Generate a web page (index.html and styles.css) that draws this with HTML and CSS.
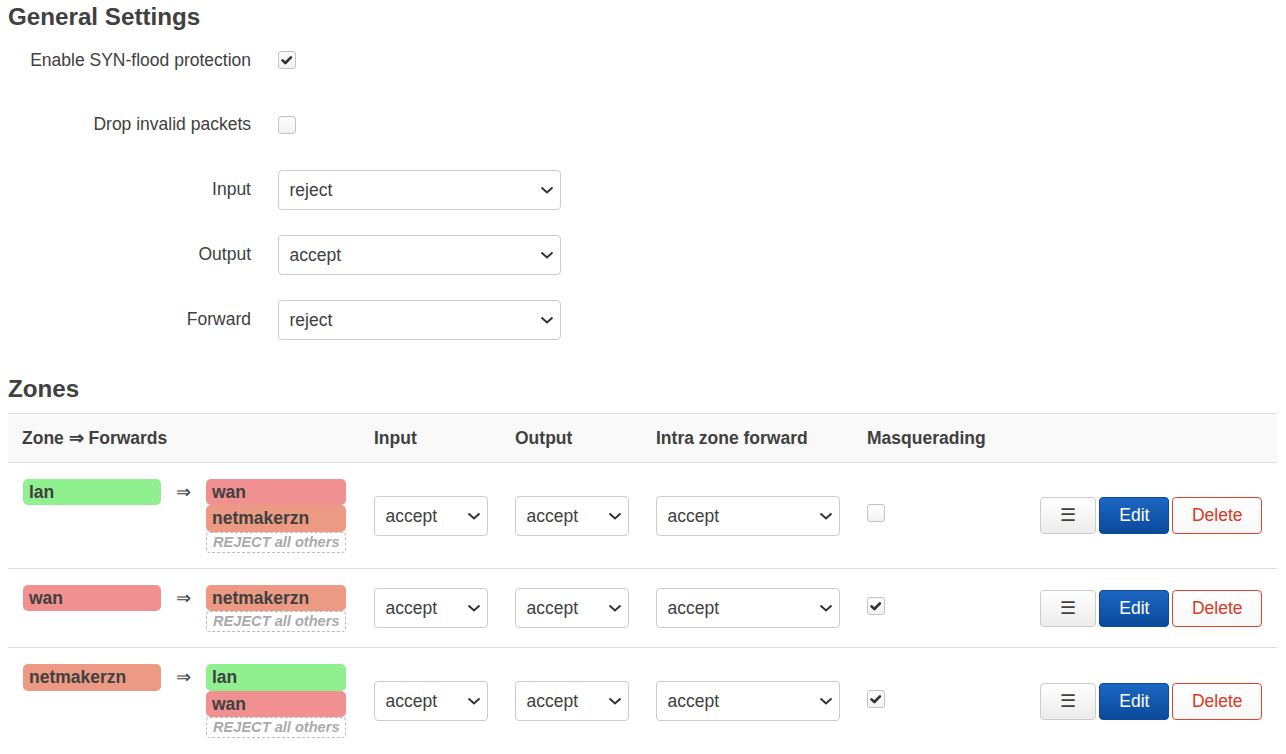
FILE: index.html
```html
<!DOCTYPE html>
<html lang="en">
<head>
    <meta charset="UTF-8">
    <meta name="viewport" content="width=device-width, initial-scale=1.0">
    <title>Firewall - Zone Settings</title>
    <link rel="stylesheet" href="styles.css">
</head>
<body>
    <h2 class="section-title">General Settings</h2>

    <div class="settings">
        <div class="field">
            <label class="field-label" for="synflood">Enable SYN-flood protection</label>
            <input type="checkbox" class="check" id="synflood" checked>
        </div>
        <div class="field">
            <label class="field-label" for="drop_invalid">Drop invalid packets</label>
            <input type="checkbox" class="check" id="drop_invalid">
        </div>
        <div class="field">
            <label class="field-label" for="input">Input</label>
            <select id="input" class="select wide">
                <option>reject</option>
                <option>accept</option>
                <option>drop</option>
            </select>
        </div>
        <div class="field">
            <label class="field-label" for="output">Output</label>
            <select id="output" class="select wide">
                <option>accept</option>
                <option>reject</option>
                <option>drop</option>
            </select>
        </div>
        <div class="field">
            <label class="field-label" for="forward">Forward</label>
            <select id="forward" class="select wide">
                <option>reject</option>
                <option>accept</option>
                <option>drop</option>
            </select>
        </div>
    </div>

    <h2 class="section-title zones-title">Zones</h2>

    <table class="zones">
        <colgroup>
            <col class="col-zone">
            <col class="col-policy">
            <col class="col-policy">
            <col class="col-intra">
            <col class="col-masq">
            <col>
        </colgroup>
        <thead>
            <tr>
                <th>Zone &rArr; Forwards</th>
                <th>Input</th>
                <th>Output</th>
                <th>Intra zone forward</th>
                <th>Masquerading</th>
                <th></th>
            </tr>
        </thead>
        <tbody>
            <tr>
                <td>
                    <div class="zone-forwards">
                        <span class="badge lan">lan</span>
                        <span class="arrow">&rArr;</span>
                        <div class="dests">
                            <span class="badge wan">wan</span>
                            <span class="badge netmaker">netmakerzn</span>
                            <span class="others">REJECT all others</span>
                        </div>
                    </div>
                </td>
                <td><select class="select small"><option>accept</option><option>reject</option><option>drop</option></select></td>
                <td><select class="select small"><option>accept</option><option>reject</option><option>drop</option></select></td>
                <td><select class="select medium"><option>accept</option><option>reject</option><option>drop</option></select></td>
                <td><input type="checkbox" class="check"></td>
                <td class="actions">
                    <button class="btn">&#9776;</button><button class="btn edit">Edit</button><button class="btn delete">Delete</button>
                </td>
            </tr>
            <tr>
                <td>
                    <div class="zone-forwards">
                        <span class="badge wan">wan</span>
                        <span class="arrow">&rArr;</span>
                        <div class="dests">
                            <span class="badge netmaker">netmakerzn</span>
                            <span class="others">REJECT all others</span>
                        </div>
                    </div>
                </td>
                <td><select class="select small"><option>accept</option><option>reject</option><option>drop</option></select></td>
                <td><select class="select small"><option>accept</option><option>reject</option><option>drop</option></select></td>
                <td><select class="select medium"><option>accept</option><option>reject</option><option>drop</option></select></td>
                <td><input type="checkbox" class="check" checked></td>
                <td class="actions">
                    <button class="btn">&#9776;</button><button class="btn edit">Edit</button><button class="btn delete">Delete</button>
                </td>
            </tr>
            <tr>
                <td>
                    <div class="zone-forwards">
                        <span class="badge netmaker">netmakerzn</span>
                        <span class="arrow">&rArr;</span>
                        <div class="dests">
                            <span class="badge lan">lan</span>
                            <span class="badge wan">wan</span>
                            <span class="others">REJECT all others</span>
                        </div>
                    </div>
                </td>
                <td><select class="select small"><option>accept</option><option>reject</option><option>drop</option></select></td>
                <td><select class="select small"><option>accept</option><option>reject</option><option>drop</option></select></td>
                <td><select class="select medium"><option>accept</option><option>reject</option><option>drop</option></select></td>
                <td><input type="checkbox" class="check" checked></td>
                <td class="actions">
                    <button class="btn">&#9776;</button><button class="btn edit">Edit</button><button class="btn delete">Delete</button>
                </td>
            </tr>
        </tbody>
    </table>
</body>
</html>
```

FILE: styles.css
```css
body {
    font-family: "Liberation Sans", Arial, sans-serif;
    font-size: 17.5px;
    color: #404040;
    background-color: #fff;
    margin: 0;
    padding: 0 8px;
}

.section-title {
    font-size: 24.2px;
    line-height: 30px;
    font-weight: bold;
    margin: 2px 0 8px;
    color: #404040;
}

.zones-title {
    margin: 34px 0 9px;
}

/* label / widget rows */
.settings {
    display: flex;
    flex-direction: column;
    gap: 24.9px;
}

.field {
    display: flex;
    align-items: center;
    height: 40px;
}

.field-label {
    width: 243px;
    text-align: right;
    margin-right: 27px;
}

.check {
    appearance: none;
    -webkit-appearance: none;
    width: 18px;
    height: 18px;
    margin: 0;
    border: 1px solid #c4c4c4;
    border-radius: 3px;
    background: linear-gradient(#fff, #f1f1f1);
    box-shadow: inset 0 1px 1px rgba(0, 0, 0, 0.04);
}

.check:checked {
    background: url("data:image/svg+xml,%3Csvg xmlns='http://www.w3.org/2000/svg' width='18' height='18'%3E%3Cpath d='M4 9.4 L7.2 12.4 L13.4 6' fill='none' stroke='%23333' stroke-width='3' stroke-linecap='round' stroke-linejoin='round'/%3E%3C/svg%3E") center / 16px 16px no-repeat, linear-gradient(#fff, #f1f1f1);
}

.select {
    appearance: none;
    -webkit-appearance: none;
    height: 40px;
    font-family: inherit;
    font-size: 17.5px;
    color: #404040;
    padding: 0 28px 0 10.5px;
    border: 1px solid #ccc;
    border-radius: 4px;
    background: #fff url("data:image/svg+xml,%3Csvg xmlns='http://www.w3.org/2000/svg' width='14' height='8'%3E%3Cpath d='M1.5 1.5 L7 6.5 L12.5 1.5' fill='none' stroke='%23333' stroke-width='2'/%3E%3C/svg%3E") no-repeat right 6px center;
}

.select.wide {
    width: 283px;
}

.select.small {
    width: 114px;
}

.select.medium {
    width: 184px;
}

/* zone table */
.zones {
    width: 1269px;
    table-layout: fixed;
    border-collapse: collapse;
}

.col-zone {
    width: 352px;
}

.col-policy {
    width: 141px;
}

.col-intra {
    width: 211px;
}

.col-masq {
    width: 174px;
}

.zones th {
    background-color: #f9f9f9;
    border-top: 1px solid #ddd;
    border-bottom: 1px solid #ddd;
    text-align: left;
    font-weight: bold;
    height: 47px;
    padding: 1px 14px 0;
}

.zones td {
    border-bottom: 1px solid #ddd;
    padding: 16px 14px 15px;
    vertical-align: middle;
}

.zones tr:last-child td {
    border-bottom: none;
}

.zone-forwards {
    display: flex;
    align-items: flex-start;
}

.badge {
    display: block;
    box-sizing: border-box;
    width: 138px;
    height: 26.5px;
    line-height: 26px;
    padding: 0 6px;
    border-radius: 5px;
    font-weight: bold;
    color: #404040;
    white-space: nowrap;
}

.zone-forwards > .badge {
    margin-left: 1px;
}

.lan {
    background-color: #90f090;
}

.wan {
    background-color: #f09090;
}

.netmaker {
    background-color: #ec9a83;
}

.arrow {
    width: 16px;
    margin: 0 14px 0 15px;
    line-height: 26px;
}

.dests {
    display: flex;
    flex-direction: column;
    width: 140px;
}

.dests .badge {
    width: 140px;
}

.others {
    box-sizing: border-box;
    height: 21px;
    line-height: 19px;
    border: 1px dashed #bbb;
    border-radius: 4px;
    padding: 0 6px;
    font-size: 14.6px;
    font-weight: bold;
    font-style: italic;
    color: #aaa;
    white-space: nowrap;
}

.zones td.actions {
    text-align: right;
    white-space: nowrap;
    padding-right: 15px;
    padding-left: 0;
}

.btn {
    height: 37px;
    padding: 0 19px;
    font-family: inherit;
    font-size: 17.5px;
    color: #404040;
    border: 1px solid #ccc;
    border-radius: 4px;
    background: linear-gradient(#fff, #ececec);
    cursor: pointer;
    vertical-align: middle;
}

.btn + .btn {
    margin-left: 3px;
}

.btn.edit {
    color: #fff;
    border-color: #0b4b9c;
    background: linear-gradient(#1c66c3, #0a4a9a);
}

.btn.delete {
    padding: 0 18.5px;
    color: #d8391f;
    border-color: #de432c;
    background: linear-gradient(#fff, #f8f8f8);
}
```
